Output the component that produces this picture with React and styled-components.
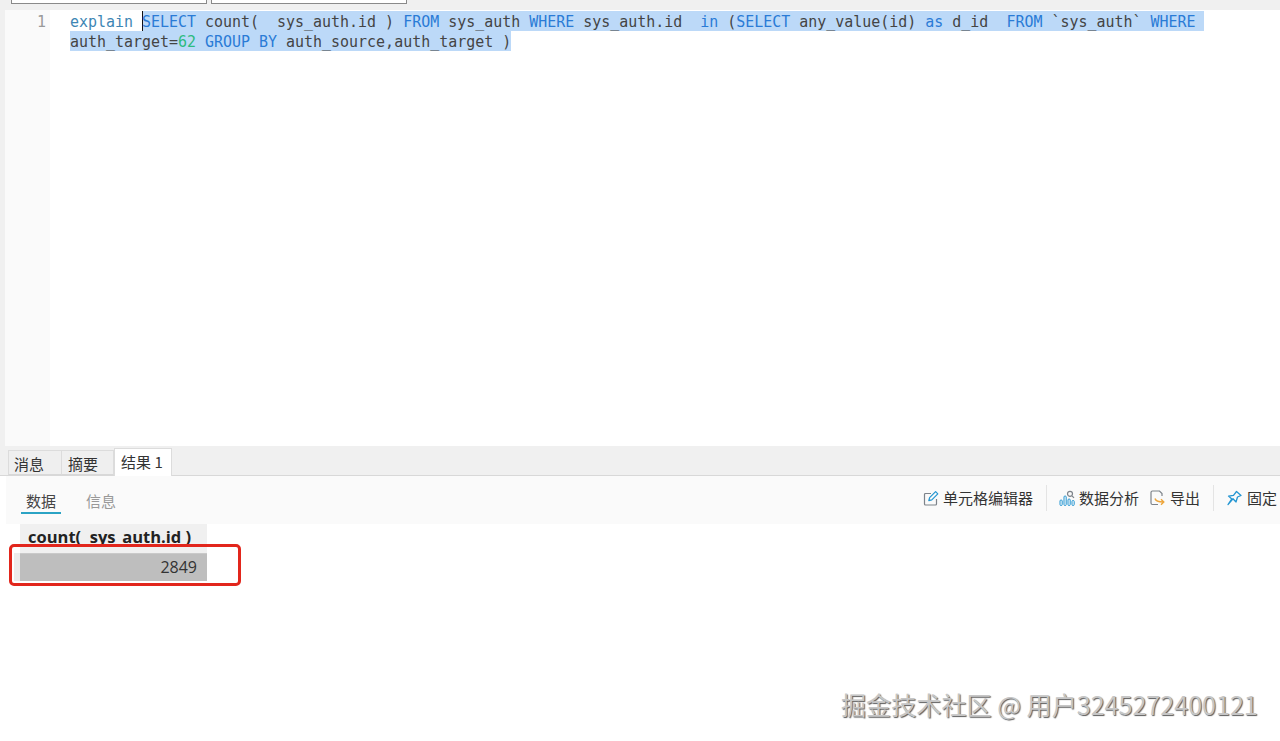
import React from 'react'
import styled, { createGlobalStyle } from 'styled-components'

const GlobalStyle = createGlobalStyle`
  html, body {
    margin: 0;
    padding: 0;
    background: #fff;
  }
`

const cjk = `"Noto Sans CJK SC", "Noto Sans", sans-serif`
const mono = `"DejaVu Sans Mono", "Liberation Mono", monospace`

const Page = styled.div`
  position: relative;
  width: 1280px;
  height: 741px;
  overflow: hidden;
  display: flex;
  flex-direction: column;
  background: #fff;
  font-family: ${cjk};
  color: #333;
`
const TopStrip = styled.div`
  height: 10px;
  flex: none;
  display: flex;
  gap: 4px;
  padding-left: 11px;
  background: #f0f0f0;
`
const ConnectionBox = styled.div`
  width: 194px;
  height: 3px;
  background: #fff;
  border: 1px solid #8a8a8a;
  border-top: 0;
`
const Editor = styled.div`
  height: 436px;
  flex: none;
  display: flex;
  border-left: 5px solid #f0f0f0;
`
const Gutter = styled.div`
  width: 45px;
  flex: none;
  box-sizing: border-box;
  padding: 1px 4px 0 0;
  background: #fafafa;
  font: 14.96px/22px ${mono};
  color: #999;
  text-align: right;
`
const Code = styled.div`
  flex: 1;
  padding: 1px 0 0 20px;
  font: 14.96px/22px ${mono};
  color: #444;
  background: #fff;
`
const CodeLine = styled.div`
  height: 20px;
  white-space: pre;
  &:first-child {
    position: relative;
    z-index: 1;
  }
`
const Selected = styled.span`
  display: inline-block;
  height: 20px;
  vertical-align: top;
  background: #bcd9f8;
  box-shadow: ${p => (p.$caret ? 'inset 1px 0 0 #111' : 'none')};
`
const Kw = styled.span`
  color: ${p => (p.$soft ? '#3d86b4' : '#2a7bd6')};
`
const Num = styled.span`
  color: #2dbb80;
`
const TabBar = styled.div`
  height: 30px;
  flex: none;
  box-sizing: border-box;
  display: flex;
  align-items: flex-end;
  padding-left: 8px;
  background: #f0f0f0;
  border-bottom: 1px solid #d8d8d8;
`
const Tab = styled.div`
  box-sizing: border-box;
  height: ${p => (p.$active ? '28px' : '25px')};
  margin-bottom: ${p => (p.$active ? '-1px' : '0')};
  padding: ${p => (p.$active ? '0 8px 2px 6px' : p.$first ? '2px 17px 0 5px' : '2px 15px 0 6px')};
  display: flex;
  align-items: center;
  font-size: 15px;
  color: #333;
  background: ${p => (p.$active ? '#fff' : '#efefef')};
  border: 1px solid #dcdcdc;
  border-left-width: ${p => (p.$first || p.$active ? '1px' : '0')};
  border-bottom: ${p => (p.$active ? '0' : '1px solid #d8d8d8')};
`
const SubBar = styled.div`
  height: 48px;
  flex: none;
  display: flex;
  align-items: flex-start;
  justify-content: space-between;
  margin-left: 6px;
  background: #fafafa;
`
const SubTabs = styled.div`
  display: flex;
  gap: 20px;
  padding: 14px 0 0 15px;
`
const SubTab = styled.div`
  box-sizing: border-box;
  width: 40px;
  height: 24px;
  text-align: center;
  font-size: 15px;
  line-height: 22px;
  color: ${p => (p.$active ? '#444' : '#999')};
  border-bottom: 2px solid ${p => (p.$active ? '#2ba3c4' : 'transparent')};
`
const Tools = styled.div`
  display: flex;
  align-items: center;
  height: 44px;
  margin-right: 3px;
`
const Tool = styled.div`
  display: flex;
  align-items: center;
  gap: ${p => (p.$pin ? 5 : 4)}px;
  font-size: 15px;
  line-height: 20px;
  color: #333;
  margin-left: ${p => p.$gap || 0}px;
  svg {
    flex: none;
  }
`
const Divider = styled.div`
  width: 1px;
  height: 26px;
  margin-left: ${p => p.$gap}px;
  background: #e4e4e4;
`
const Grid = styled.div`
  flex: 1;
  padding-left: 8px;
  margin-left: 6px;
  background: #fff;
`
const HeaderCell = styled.div`
  box-sizing: border-box;
  width: 187px;
  height: 29px;
  margin-left: 6px;
  padding-left: 8px;
  background: #f0f0f0;
  font: bold 16.5px/25px "Open Sans", "Liberation Sans", sans-serif;
  color: #222;
  white-space: pre;
`
const Row = styled.div`
  display: flex;
  height: 28px;
`
const RowHandle = styled.div`
  width: 6px;
  background: #ececec;
`
const ValueCell = styled.div`
  box-sizing: border-box;
  width: 187px;
  padding-right: 10px;
  background: #bebebe;
  border-top: 1px solid #c9c9c9;
  text-align: right;
  font: 16px/27px "Open Sans", "Liberation Sans", sans-serif;
  color: #333;
`
const RedBox = styled.div`
  position: absolute;
  left: 9px;
  top: 544px;
  width: 232px;
  height: 42px;
  box-sizing: border-box;
  border: 3px solid #e2261c;
  border-radius: 5px;
`
const Watermark = styled.div`
  position: absolute;
  left: 841px;
  top: 686px;
  font-family: ${cjk};
  font-size: 25.1px;
  line-height: 36px;
  white-space: pre;
  color: #c6c6c6;
  text-shadow: 1px 1px 1px #5c5c5c;
`

const CellEditIcon = () => (
  <svg width="16" height="16" viewBox="0 0 16 16" fill="none">
    <path d="M8 3.5H2.5a1 1 0 0 0-1 1v9.5a1 1 0 0 0 1 1h10a1 1 0 0 0 1-1V9" stroke="#7d838a" strokeWidth="1.2" />
    <path d="M5.8 10.6l.8-3L12.6 1.6l2.2 2.2-6 6z" stroke="#2496d2" strokeWidth="1.2" strokeLinejoin="round" />
  </svg>
)
const AnalysisIcon = () => (
  <svg width="16" height="16" viewBox="0 0 16 16" fill="none">
    <circle cx="11" cy="3.8" r="2.5" stroke="#7d838a" strokeWidth="1.2" />
    <path d="M13 5.8l2 2" stroke="#7d838a" strokeWidth="1.2" />
    <rect x="1" y="10" width="2.2" height="5.5" rx="1" stroke="#2496d2" />
    <rect x="5" y="6" width="2.2" height="9.5" rx="1" stroke="#2496d2" />
    <rect x="9" y="9" width="2.2" height="6.5" rx="1" stroke="#2496d2" />
    <rect x="13" y="10.5" width="2.2" height="5" rx="1" stroke="#2496d2" />
  </svg>
)
const ExportIcon = () => (
  <svg width="16" height="16" viewBox="0 0 16 16" fill="none">
    <path d="M8 14.5H2.5a1.5 1.5 0 0 1-1.5-1.5V2.5A1.5 1.5 0 0 1 2.5 1h7L12 3.5V6" stroke="#7d838a" strokeWidth="1.2" />
    <path d="M5 8.5c.5 2.5 3 3.5 8.5 3.5M11 9.3l2.8 2.7-2.8 2.7" stroke="#eda53a" strokeWidth="1.4" />
  </svg>
)
const PinIcon = () => (
  <svg width="15" height="16" viewBox="0 0 15 16" fill="none">
    <path
      d="M9.5 1.5l4.5 4-3.5 1.5-1.5 5-3-3.2L1 14.5l3.8-5.6-3.3-2.8 5-.8z"
      stroke="#2496d2"
      strokeWidth="1.3"
      strokeLinejoin="round"
    />
  </svg>
)

export default function App() {
  return (
    <Page>
      <GlobalStyle />
      <TopStrip>
        <ConnectionBox />
        <ConnectionBox />
      </TopStrip>
      <Editor>
        <Gutter>1</Gutter>
        <Code>
          <CodeLine>
            <Kw $soft>explain</Kw>{' '}
            <Selected $caret>
              <Kw>SELECT</Kw> count(  sys_auth.id ) <Kw>FROM</Kw> sys_auth <Kw>WHERE</Kw> sys_auth.id  <Kw>in</Kw> (<Kw>SELECT</Kw> any_value(id) <Kw>as</Kw> d_id  <Kw>FROM</Kw> `sys_auth` <Kw>WHERE</Kw>{' '}
            </Selected>
          </CodeLine>
          <CodeLine>
            <Selected>
              auth_target=<Num>62</Num> <Kw>GROUP BY</Kw> auth_source,auth_target )
            </Selected>
          </CodeLine>
        </Code>
      </Editor>
      <TabBar>
        <Tab $first>消息</Tab>
        <Tab>摘要</Tab>
        <Tab $active>结果 1</Tab>
      </TabBar>
      <SubBar>
        <SubTabs>
          <SubTab $active>数据</SubTab>
          <SubTab>信息</SubTab>
        </SubTabs>
        <Tools>
          <Tool>
            <CellEditIcon />
            单元格编辑器
          </Tool>
          <Divider $gap={13} />
          <Tool $gap={12}>
            <AnalysisIcon />
            数据分析
          </Tool>
          <Tool $gap={11}>
            <ExportIcon />
            导出
          </Tool>
          <Divider $gap={13} />
          <Tool $gap={13} $pin>
            <PinIcon />
            固定
          </Tool>
        </Tools>
      </SubBar>
      <Grid>
        <HeaderCell>count(  sys_auth.id )</HeaderCell>
        <Row>
          <RowHandle />
          <ValueCell>2849</ValueCell>
        </Row>
      </Grid>
      <RedBox />
      <Watermark>掘金技术社区 @ 用户3245272400121</Watermark>
    </Page>
  )
}
